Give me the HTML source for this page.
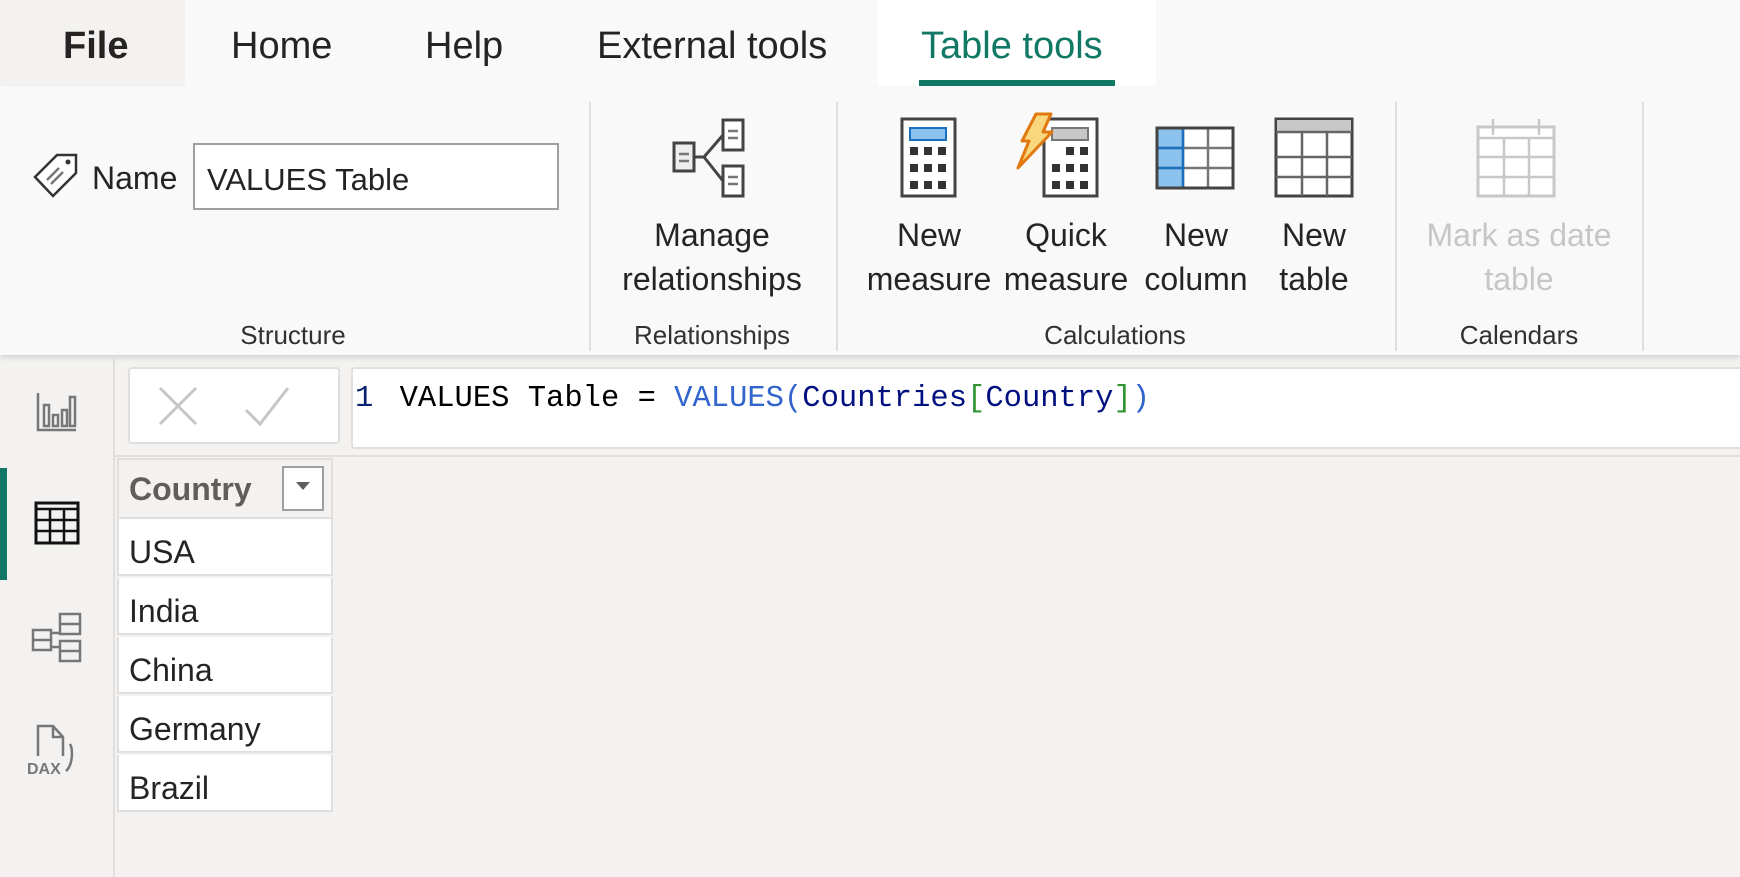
<!DOCTYPE html>
<html><head><meta charset="utf-8"><style>
*{margin:0;padding:0;box-sizing:border-box}
body{width:1740px;height:877px;overflow:hidden;background:#f3f2f1;font-family:"Liberation Sans",sans-serif;color:#252423;position:relative}
.a{position:absolute;white-space:nowrap}
.tab{font-size:38px;top:25px;color:#252423}
.lbl{font-size:32px;text-align:center;line-height:44px;transform:translateX(-50%)}
.grp{font-size:26px;top:320px;transform:translateX(-50%);color:#323130}
.sep{top:102px;width:2px;height:249px;background:#e1dfdd}
.row{left:117px;width:216px;height:57px;background:#fff;border:2px solid #e1dfdd;border-top:none;font-size:32px;padding-left:10px;padding-top:4px;line-height:58px}
</style></head><body>
<div class="a" style="left:0;top:0;width:1740px;height:86px;background:#f9f9f9"></div>
<div class="a" style="left:0;top:0;width:185px;height:86px;background:#f3f2f1"></div>
<div class="a" style="left:878px;top:0;width:278px;height:87px;background:#fff"></div>
<div class="a tab" style="left:63px;font-weight:bold">File</div>
<div class="a tab" style="left:231px">Home</div>
<div class="a tab" style="left:425px">Help</div>
<div class="a tab" style="left:597px">External tools</div>
<div class="a tab" style="left:921px;color:#117865">Table tools</div>
<div class="a" style="left:919px;top:80px;width:196px;height:6px;background:#117865"></div>
<div class="a" style="left:0;top:86px;width:1740px;height:269px;background:#f9f9f9;box-shadow:0 3px 5px rgba(0,0,0,.12)"></div>
<svg class="a" style="left:30px;top:150px" width="52" height="52" viewBox="30 150 52 52"><path d="M35 177 L57 155 L76 155 L76 173 L53 196 Z" fill="#fff" stroke="#333" stroke-width="2.5"/><circle cx="68" cy="162" r="2.5" fill="#333"/><path d="M47 180 L59 168 M51 184 L63 172" stroke="#777" stroke-width="2.5"/></svg>
<div class="a" style="left:92px;top:160px;font-size:32px">Name</div>
<div class="a" style="left:193px;top:143px;width:366px;height:67px;background:#fff;border:2px solid #a19f9d;font-size:31px;padding-left:12px;padding-top:3px;line-height:63px">VALUES Table</div>
<div class="a grp" style="left:293px">Structure</div>
<div class="a sep" style="left:589px"></div>
<svg class="a" style="left:670px;top:117px" width="90" height="85"><g fill="#fff" stroke="#444" stroke-width="3"><rect x="4" y="26" width="20" height="28" fill="#eee"/><rect x="53" y="3" width="20" height="30"/><rect x="53" y="49" width="20" height="30"/></g><path d="M24 40 L34 40 L53 18 M34 40 L53 64" stroke="#444" stroke-width="3" fill="none"/><path d="M9 37h10M9 44h10M58 14h10M58 21h10M58 60h10M58 67h10" stroke="#777" stroke-width="2.5"/></svg>
<div class="a lbl" style="left:712px;top:213px">Manage<br>relationships</div>
<div class="a grp" style="left:712px">Relationships</div>
<div class="a sep" style="left:836px"></div>
<svg class="a" style="left:900px;top:117px" width="60" height="82"><rect x="2" y="2" width="53" height="77" fill="#fff" stroke="#444" stroke-width="3"/><rect x="10" y="11" width="36" height="12" fill="#8cc3ee" stroke="#1a6fc0" stroke-width="2"/><g fill="#333"><rect x="10" y="30" width="8" height="8"/><rect x="24" y="30" width="8" height="8"/><rect x="38" y="30" width="8" height="8"/><rect x="10" y="47" width="8" height="8"/><rect x="24" y="47" width="8" height="8"/><rect x="38" y="47" width="8" height="8"/><rect x="10" y="64" width="8" height="8"/><rect x="24" y="64" width="8" height="8"/><rect x="38" y="64" width="8" height="8"/></g></svg>
<svg class="a" style="left:1015px;top:111px" width="90" height="90"><rect x="29" y="8" width="53" height="77" fill="#fff" stroke="#444" stroke-width="3"/><rect x="37" y="17" width="36" height="12" fill="#c8c8c8" stroke="#777" stroke-width="2"/><g fill="#333"><rect x="51" y="36" width="8" height="8"/><rect x="65" y="36" width="8" height="8"/><rect x="37" y="53" width="8" height="8"/><rect x="51" y="53" width="8" height="8"/><rect x="65" y="53" width="8" height="8"/><rect x="37" y="70" width="8" height="8"/><rect x="51" y="70" width="8" height="8"/><rect x="65" y="70" width="8" height="8"/></g><path d="M21 3 L36 3 L28 21 L37 21 L3 57 L14 30 L7 30 Z" fill="#f8d77d" stroke="#e07a10" stroke-width="3" stroke-linejoin="round"/></svg>
<svg class="a" style="left:1155px;top:126px" width="82" height="66"><rect x="2" y="2" width="76" height="60" fill="#fff" stroke="#444" stroke-width="3"/><rect x="3" y="3" width="25" height="58" fill="#8cc3ee"/><path d="M28 2v60M53 2v60M2 22h76M2 42h76" stroke="#777" stroke-width="2.5"/><path d="M28 2v60M3 22h25M3 42h25" stroke="#1a6fc0" stroke-width="2.5"/><rect x="2" y="2" width="76" height="60" fill="none" stroke="#444" stroke-width="3"/></svg>
<svg class="a" style="left:1274px;top:117px" width="82" height="84"><rect x="2" y="2" width="76" height="77" fill="#fff" stroke="#444" stroke-width="3"/><rect x="3" y="3" width="74" height="12" fill="#c8c8c8"/><path d="M2 15h76M2 40h76M2 60h76M28 15v64M53 15v64" stroke="#666" stroke-width="2.5"/></svg>
<div class="a lbl" style="left:929px;top:213px">New<br>measure</div>
<div class="a lbl" style="left:1066px;top:213px">Quick<br>measure</div>
<div class="a lbl" style="left:1196px;top:213px">New<br>column</div>
<div class="a lbl" style="left:1314px;top:213px">New<br>table</div>
<div class="a grp" style="left:1115px">Calculations</div>
<div class="a sep" style="left:1395px"></div>
<svg class="a" style="left:1476px;top:117px" width="84" height="84"><rect x="2" y="10" width="76" height="69" fill="#fff" stroke="#c8c8c8" stroke-width="3"/><path d="M2 21h76M2 40h76M2 60h76M28 21v58M53 21v58M17 2v16M63 2v16" stroke="#c8c8c8" stroke-width="2.5"/></svg>
<div class="a lbl" style="left:1519px;top:213px;color:#c8c6c4">Mark as date<br>table</div>
<div class="a grp" style="left:1519px">Calendars</div>
<div class="a sep" style="left:1642px"></div>

<div class="a" style="left:113px;top:357px;width:2px;height:520px;background:#e1dfdd"></div>
<div class="a" style="left:0;top:468px;width:7px;height:112px;background:#117865"></div>
<svg class="a" style="left:36px;top:391px" width="44" height="42"><path d="M2 2v37h38" stroke="#777" stroke-width="2.5" fill="none"/><g fill="none" stroke="#777" stroke-width="2.5"><rect x="8" y="14" width="5" height="21"/><rect x="17" y="24" width="5" height="11"/><rect x="26" y="19" width="5" height="16"/><rect x="34" y="6" width="5" height="29"/></g></svg>
<svg class="a" style="left:34px;top:501px" width="48" height="46"><rect x="2" y="2" width="42" height="40" fill="none" stroke="#111" stroke-width="3"/><path d="M2 8h42M2 19h42M2 30h42M16 8v34M30 8v34" stroke="#111" stroke-width="2.5"/></svg>
<svg class="a" style="left:30px;top:611px" width="56" height="52"><g fill="none" stroke="#777" stroke-width="2.5"><rect x="3" y="19" width="18" height="20"/><rect x="30" y="3" width="20" height="20"/><rect x="30" y="30" width="20" height="20"/><path d="M3 29h18M30 13h20M30 40h20M21 22h9M21 36h9"/></g></svg>
<svg class="a" style="left:26px;top:722px" width="56" height="56"><path d="M12 34V4h15l10 11v19" fill="none" stroke="#777" stroke-width="2.5"/><path d="M27 4v11h10M44 22c3 5 3 21-4 27" fill="none" stroke="#777" stroke-width="2.5"/><text x="1" y="52" font-family="Liberation Sans" font-weight="bold" font-size="16" fill="#777">DAX</text></svg>

<div class="a" style="left:128px;top:367px;width:212px;height:77px;background:#fff;border:2px solid #e1dfdd;border-radius:4px"></div>
<svg class="a" style="left:155px;top:385px" width="150" height="45"><path d="M5 3l36 36M41 3L5 39" stroke="#c8c6c4" stroke-width="3"/><path d="M91 25l14 14l28-36" stroke="#c8c6c4" stroke-width="3" fill="none"/></svg>
<div class="a" style="left:351px;top:367px;width:1400px;height:82px;background:#fff;border:2px solid #e1dfdd;border-radius:4px"></div>
<div class="a" style="left:355px;top:382px;font-family:'Liberation Mono',monospace;font-size:30.5px;color:#000;white-space:pre"><span style="color:#0b216f">1</span> <span style="margin-left:8px">VALUES Table = </span><span style="color:#3164cc">VALUES(</span><span style="color:#001080">Countries</span><span style="color:#319331">[</span><span style="color:#001080">Country</span><span style="color:#319331">]</span><span style="color:#3164cc">)</span></div>
<div class="a" style="left:115px;top:455px;width:1625px;height:2px;background:#e1dfdd"></div>

<div class="a" style="left:117px;top:458px;width:216px;height:61px;background:#f3f2f1;border:2px solid #e1dfdd"></div>
<div class="a" style="left:129px;top:471px;font-size:32px;font-weight:bold;color:#605e5c">Country</div>
<div class="a" style="left:282px;top:466px;width:42px;height:45px;border:2px solid #a19f9d;background:#fff"></div>
<svg class="a" style="left:295px;top:480px" width="16" height="12"><path d="M1 2h14l-7 8z" fill="#605e5c"/></svg>
<div class="a row" style="top:519px">USA</div>
<div class="a row" style="top:578px">India</div>
<div class="a row" style="top:637px">China</div>
<div class="a row" style="top:696px">Germany</div>
<div class="a row" style="top:755px">Brazil</div>
</body></html>
